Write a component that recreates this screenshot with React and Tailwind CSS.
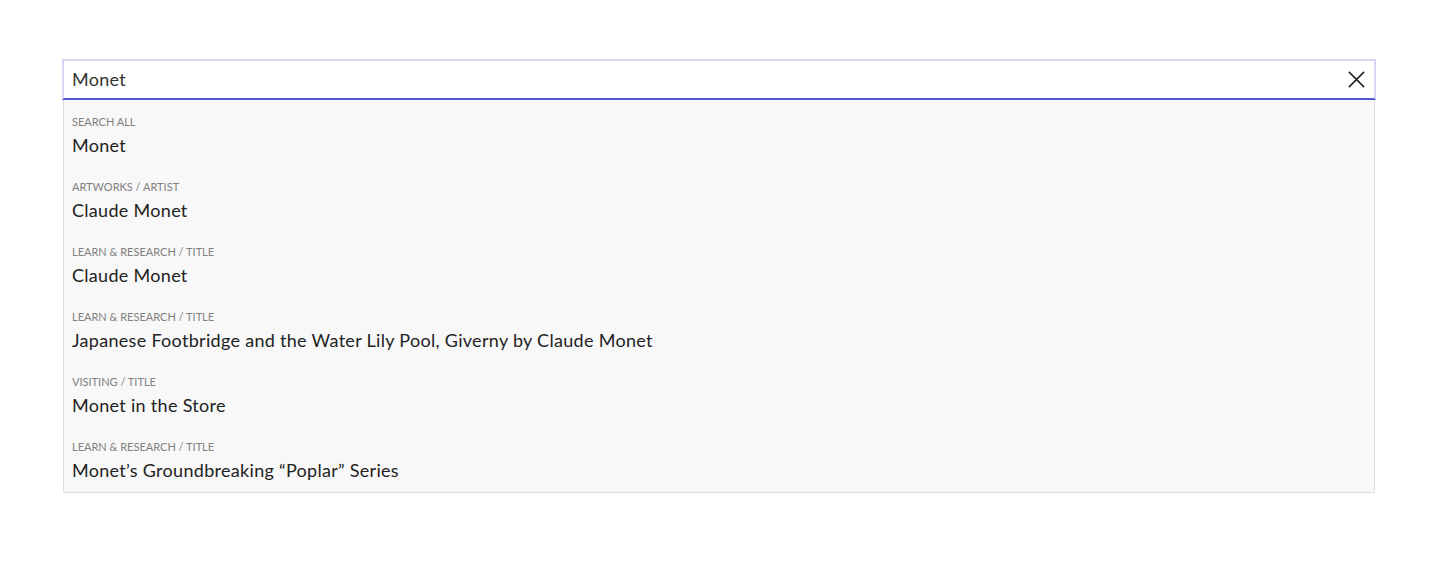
import React, { useState } from "react";

const results = [
  { label: "Search All", title: "Monet" },
  { label: "Artworks / Artist", title: "Claude Monet" },
  { label: "Learn & Research / Title", title: "Claude Monet" },
  {
    label: "Learn & Research / Title",
    title: "Japanese Footbridge and the Water Lily Pool, Giverny by Claude Monet",
  },
  { label: "Visiting / Title", title: "Monet in the Store" },
  { label: "Learn & Research / Title", title: "Monet\u2019s Groundbreaking \u201cPoplar\u201d Series" },
];

export default function App() {
  const [query, setQuery] = useState("Monet");

  return (
    <div className="min-h-[565px] bg-white font-['Lato',sans-serif] pl-[62px] pr-[64px] pt-[59px]">
      {/* search input */}
      <div className="flex items-center h-[41px] border-2 border-[#d6d6f5] border-b-[#5258cf] bg-white">
        <input
          value={query}
          onChange={(e) => setQuery(e.target.value)}
          className="flex-1 h-full pl-[8px] pb-[2px] text-[18px] tracking-[0.3px] text-[#333] outline-none bg-transparent"
        />
        <button className="w-[36px] h-full flex items-center justify-center text-[#222]">
          <svg width="19" height="19" viewBox="0 0 20 20" fill="none" stroke="currentColor" strokeWidth="1.6">
            <path d="M2 2L18 18M18 2L2 18" />
          </svg>
        </button>
      </div>

      {/* results dropdown */}
      <div className="mx-px pb-[2px] bg-[#f8f8f8] border border-t-0 border-[#dcdcdc] rounded-b-[2px]">
        {results.map((r, i) => (
          <div key={i} className="px-[8px] pt-[15px] pb-[8px]">
            <div className="text-[11px] leading-[14px] uppercase text-[#808080]">{r.label}</div>
            <div className="mt-[4px] text-[18px] leading-[24px] tracking-[0.3px] text-[#222]">{r.title}</div>
          </div>
        ))}
      </div>
    </div>
  );
}
